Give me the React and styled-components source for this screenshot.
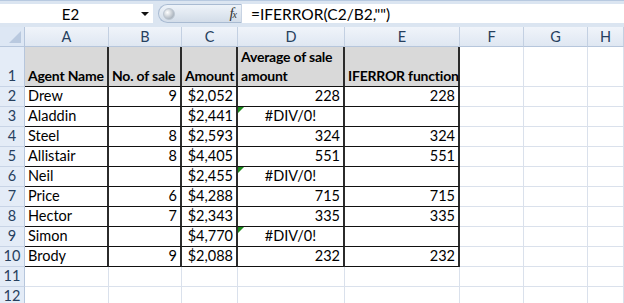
import React from "react";
import styled, { createGlobalStyle } from "styled-components";

const GlobalStyle = createGlobalStyle`
  body {
    margin: 0;
    background: #ffffff;
    font-family: "Lato", "Liberation Sans", sans-serif;
  }
`;

const Window = styled.div`
  width: 624px;
  height: 303px;
  overflow: hidden;
  background: #ffffff;
`;

const FormulaBar = styled.div`
  display: flex;
  height: 27px;
  box-sizing: border-box;
  padding: 3px 0 4px 0;
  background: #dbe5f1;
  border-top: 1px solid #b7c9e0;
`;

const NameBox = styled.div`
  position: relative;
  width: 153px;
  display: flex;
  align-items: center;
  justify-content: center;
  background: #ffffff;
  font-size: 15px;
  color: #000;
  padding-right: 12px;
  box-sizing: border-box;
`;

const DropArrow = styled.span`
  position: absolute;
  right: 4px;
  top: 8px;
  width: 0;
  height: 0;
  border-left: 4px solid transparent;
  border-right: 4px solid transparent;
  border-top: 4px solid #111;
`;

const Pill = styled.div`
  margin-left: 5px;
  width: 83px;
  display: flex;
  align-items: center;
  justify-content: space-between;
  padding: 0 5px 0 4px;
  box-sizing: border-box;
  border-radius: 10px 0 0 10px;
  background: linear-gradient(#eef3f9, #d3dde9);
  border: 1px solid #a9bbd2;
  border-right: none;
`;

const Knob = styled.span`
  width: 10px;
  height: 10px;
  border-radius: 50%;
  background: radial-gradient(circle at 35% 35%, #ffffff, #aeb7c1 70%);
  border: 1px solid #bcc6d1;
`;

const Fx = styled.span`
  font-family: "Liberation Serif", serif;
  font-style: italic;
  font-size: 15px;
  color: #333;
  letter-spacing: -1px;
  sub {
    font-size: 10px;
    vertical-align: baseline;
  }
`;

const FormulaInput = styled.div`
  flex: 1;
  display: flex;
  align-items: center;
  padding-left: 9px;
  background: #ffffff;
  border-left: 1px solid #c7d3e3;
  font-size: 15.5px;
  color: #000;
`;

const Sheet = styled.div`
  display: grid;
  grid-template-columns: 25px 84px 73px 56px 107px 115px 64px 64px 36px;
  grid-template-rows: 20px 40px repeat(11, 20px);
  font-size: 14px;
`;

const Corner = styled.div`
  position: relative;
  background: #dde7f4;
  border-right: 1px solid #b6c6dc;
  border-bottom: 1px solid #b6c6dc;
  &::after {
    content: "";
    position: absolute;
    right: 3px;
    bottom: 3px;
    border-left: 12px solid transparent;
    border-bottom: 12px solid #b9c9df;
  }
`;

const ColHead = styled.div`
  display: flex;
  align-items: center;
  justify-content: center;
  background: linear-gradient(#f0f4fa, #dfe7f2);
  border-right: 1px solid #c3d0e2;
  border-bottom: 1px solid #b6c6dc;
  color: #27405e;
  font-size: 14.5px;
`;

const RowHead = styled.div`
  display: flex;
  align-items: flex-end;
  justify-content: center;
  padding-bottom: 1px;
  box-sizing: border-box;
  background: #e4ecf7;
  border-right: 1px solid #b6c6dc;
  border-bottom: 1px solid #c8d4e6;
  color: #27405e;
  font-size: 14.5px;
  line-height: 18px;
`;

const Cell = styled.div`
  position: relative;
  display: flex;
  flex-direction: column;
  justify-content: flex-end;
  align-items: ${(p) =>
    p.$align === "right" ? "flex-end" : p.$align === "center" ? "center" : "flex-start"};
  padding: 0 3px 1px 3px;
  box-sizing: border-box;
  line-height: 19px;
  white-space: nowrap;
  color: #000;
  font-size: ${(p) => (p.$bold ? "14px" : "14.5px")};
  font-weight: ${(p) => (p.$bold ? 700 : 400)};
  letter-spacing: ${(p) => (p.$bold ? "-0.2px" : "0")};
  background: ${(p) => (p.$fill ? "#d9d9d9" : "#ffffff")};
  border-right: ${(p) => (p.$boxed ? "2px solid #2b2b2b" : "1px solid #dae1ec")};
  border-bottom: ${(p) => (p.$boxed ? "1px solid #111" : "1px solid #dae1ec")};
`;

const ErrorMark = styled.span`
  position: absolute;
  left: 0;
  top: 0;
  border-right: 6px solid transparent;
  border-top: 6px solid #1d8a1d;
`;

const columns = ["A", "B", "C", "D", "E", "F", "G", "H"];

const rows = [
  ["Drew", "9", "$2,052", "228", "228"],
  ["Aladdin", "", "$2,441", "#DIV/0!", ""],
  ["Steel", "8", "$2,593", "324", "324"],
  ["Allistair", "8", "$4,405", "551", "551"],
  ["Neil", "", "$2,455", "#DIV/0!", ""],
  ["Price", "6", "$4,288", "715", "715"],
  ["Hector", "7", "$2,343", "335", "335"],
  ["Simon", "", "$4,770", "#DIV/0!", ""],
  ["Brody", "9", "$2,088", "232", "232"],
];

const headers = ["Agent Name", "No. of sale", "Amount", "Average of sale|amount", "IFERROR function"];

const EmptyCells = ({ count }) =>
  Array.from({ length: count }, (_, i) => <Cell key={"e" + i} />);

const App = () => {
  return (
    <Window>
      <GlobalStyle />
      <FormulaBar>
        <NameBox>
          E2
          <DropArrow />
        </NameBox>
        <Pill>
          <Knob />
          <Fx>
            f<sub>x</sub>
          </Fx>
        </Pill>
        <FormulaInput>=IFERROR(C2/B2,"")</FormulaInput>
      </FormulaBar>
      <Sheet>
        <Corner />
        {columns.map((c) => (
          <ColHead key={c}>{c}</ColHead>
        ))}

        <RowHead>1</RowHead>
        {headers.map((h) => (
          <Cell key={h} $fill $bold $boxed>
            {h.split("|").map((line) => (
              <span key={line}>{line}</span>
            ))}
          </Cell>
        ))}
        <EmptyCells count={3} />

        {rows.map((r, i) => {
          const isError = r[3].startsWith("#");
          return (
            <React.Fragment key={r[0]}>
              <RowHead>{i + 2}</RowHead>
              <Cell $boxed>{r[0]}</Cell>
              <Cell $boxed $align="right">{r[1]}</Cell>
              <Cell $boxed $align="right">{r[2]}</Cell>
              <Cell $boxed $align={isError ? "center" : "right"}>
                {isError && <ErrorMark />}
                {r[3]}
              </Cell>
              <Cell $boxed $align="right">{r[4]}</Cell>
              <EmptyCells count={3} />
            </React.Fragment>
          );
        })}

        {[11, 12].map((n) => (
          <React.Fragment key={n}>
            <RowHead>{n}</RowHead>
            <EmptyCells count={8} />
          </React.Fragment>
        ))}
      </Sheet>
    </Window>
  );
};

export default App;
